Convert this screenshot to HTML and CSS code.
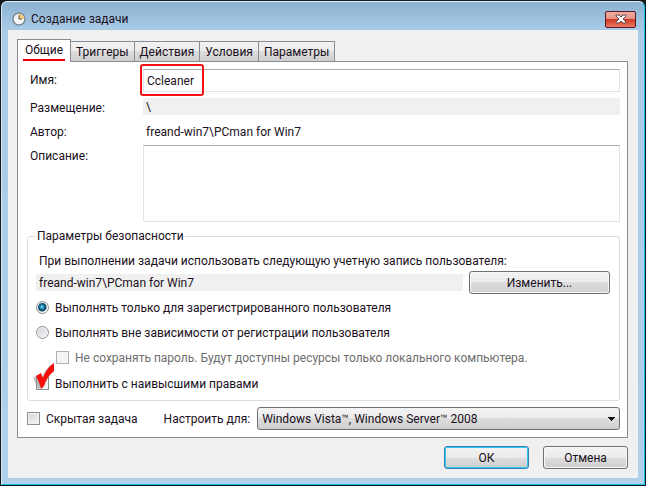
FILE: index.html
```html
<!DOCTYPE html>
<html lang="ru">
<head>
  <meta charset="UTF-8" />
  <meta name="viewport" content="width=device-width, initial-scale=1.0"/>
  <title>Создание задачи</title>
  <link rel="stylesheet" href="styles.css">
</head>
<body>
  <div class="window">
    <div class="title-bar">
      <svg class="title-icon" width="14" height="14" viewBox="0 0 14 14">
        <circle cx="7" cy="7" r="6" fill="#f3f5f6" stroke="#7d8890" stroke-width="1.4"/>
        <path d="M7 7V2A5 5 0 0 1 12 7Z" fill="#f6cf78"/>
        <path d="M7 3V7H10" fill="none" stroke="#5a5040" stroke-width="1"/>
      </svg>
      <span class="title-text">Создание задачи</span>
      <button class="close-btn" aria-label="Закрыть">
        <svg width="12" height="10" viewBox="0 0 12 10">
          <path d="M1 1H4L6 3L8 1H11V2L8 5L11 8V9H8L6 7L4 9H1V8L4 5L1 2Z" fill="#fff" stroke="#5e4a50" stroke-width="1"/>
        </svg>
      </button>
    </div>

    <div class="client">
      <div class="tabs" role="tablist">
        <button class="tab active" role="tab" aria-selected="true"><span>Общие</span></button>
        <button class="tab" role="tab">Триггеры</button>
        <button class="tab" role="tab">Действия</button>
        <button class="tab" role="tab">Условия</button>
        <button class="tab" role="tab">Параметры</button>
      </div>

      <form class="panel" id="taskForm">
        <div class="fields">
          <label for="name">Имя:</label>
          <div class="name-wrap">
            <input type="text" id="name" class="text-input" value="Ccleaner">
            <div class="highlight"></div>
          </div>
          <label for="location">Размещение:</label>
          <input type="text" id="location" class="readonly" value="\" readonly>
          <label for="author">Автор:</label>
          <output id="author" class="author">freand-win7\PCman for Win7</output>
          <label for="description">Описание:</label>
          <textarea id="description" class="text-area"></textarea>
        </div>

        <fieldset class="security">
          <legend>Параметры безопасности</legend>
          <label class="account-label" for="account">При выполнении задачи использовать следующую учетную запись пользователя:</label>
          <div class="account-row">
            <input type="text" id="account" class="readonly" value="freand-win7\PCman for Win7" readonly>
            <button type="button" class="btn">Изменить...</button>
          </div>
          <label class="option"><input type="radio" name="logon" checked>Выполнять только для зарегистрированного пользователя</label>
          <label class="option"><input type="radio" name="logon">Выполнять вне зависимости от регистрации пользователя</label>
          <label class="option nested"><input type="checkbox" disabled>Не сохранять пароль. Будут доступны ресурсы только локального компьютера.</label>
          <label class="option highest">
            <input type="checkbox">Выполнить с наивысшими правами
            <svg class="red-check" width="24" height="30" viewBox="0 0 24 30">
              <path d="M1 16L5 13L9 18C11 11 15 5 19 3L18 9C14 14 12 19 10 26L6 27Z" fill="#777" opacity="0.4"/>
              <path d="M4 14L9 11L11 16C13 10 17 4 22 1V9C17 13 14 18 12 24L9 27C8 22 6 18 4 14Z" fill="#f5100c"/>
            </svg>
          </label>
        </fieldset>

        <div class="bottom-row">
          <label class="option"><input type="checkbox">Скрытая задача</label>
          <label class="configure-label" for="configure">Настроить для:</label>
          <select id="configure" class="select">
            <option>Windows Vista™, Windows Server™ 2008</option>
          </select>
        </div>
      </form>

      <div class="actions">
        <button type="submit" form="taskForm" class="btn default">ОК</button>
        <button type="button" class="btn">Отмена</button>
      </div>
    </div>
  </div>
</body>
</html>
```
FILE: styles.css
```css
* {
  box-sizing: border-box;
}
body {
  margin: 0;
  background: #16181c;
  color: #1a1020;
}
body, button, input, textarea, select {
  font-family: Roboto, "Noto Sans", sans-serif;
  font-size: 12px;
  line-height: 16px;
}
button, input, textarea, select {
  color: inherit;
  margin: 0;
}
.window {
  display: flex;
  flex-direction: column;
  min-height: calc(100vh - 2px);
  margin: 1px;
  padding: 0 6px 6px;
  border: 1px solid #0fc3e6;
  border-top-color: #e4f2fa;
  border-left-color: #d5e9f6;
  border-radius: 6px 6px 0 0;
  background: linear-gradient(#8bb2d2, #a9cbe6 28px, #b1d0ea);
}
.title-bar {
  display: flex;
  align-items: center;
  height: 28px;
  padding: 6px 2px 0 4px;
}
.title-text {
  flex: 1;
  margin-left: 5px;
}
.close-btn {
  display: flex;
  align-items: center;
  justify-content: center;
  width: 31px;
  height: 17px;
  padding: 0;
  border: 1px solid #5a1a22;
  border-radius: 2px;
  background: linear-gradient(#f0aca3, #e58f82 50%, #d03a26 50%, #ea7862);
}
.client {
  flex: 1;
  padding: 9px 10px 8px 9px;
  background: #f0f0f0;
}

/* tabs */
.tabs {
  display: flex;
  align-items: flex-end;
}
.tab {
  height: 20px;
  padding: 0 5px;
  border: 1px solid #898c95;
  border-bottom: none;
  border-left: none;
  background: linear-gradient(#f2f2f2, #ebebeb 50%, #dddddd 50%, #cfcfcf);
}
.tab.active {
  height: 23px;
  margin-bottom: -1px;
  padding: 0 5px;
  border-left: 1px solid #898c95;
  background: #fff;
  z-index: 1;
}
.tab.active span {
  display: block;
  height: 20px;
  padding: 1px 2px 0;
  border-bottom: 2px solid #f5000a;
}
.panel {
  padding: 7px 7px 7px 9px;
  border: 1px solid #898c95;
  background: #fff;
}

/* general fields */
.fields {
  display: grid;
  grid-template-columns: 109px 1fr;
  column-gap: 4px;
  row-gap: 5px;
  padding-left: 3px;
}
.fields label {
  padding-top: 3px;
}
.name-wrap {
  position: relative;
  display: flex;
}
.text-input {
  width: 100%;
  height: 23px;
  padding: 0 3px;
  border: 1px solid #e2e3ea;
  border-top-color: #abadb3;
}
.highlight {
  position: absolute;
  top: -5px;
  left: -3px;
  width: 64px;
  height: 32px;
  border: 2px solid #fa0f14;
  border-radius: 3px;
  pointer-events: none;
}
.readonly {
  align-self: center;
  width: 100%;
  height: 17px;
  padding: 0 3px;
  border: none;
  background: #f0f0f0;
}
.author {
  padding: 3px 3px 0;
}
.text-area {
  width: 100%;
  height: 77px;
  border: 1px solid #e2e3ea;
  border-top-color: #abadb3;
  resize: none;
}

/* security group */
.security {
  margin: 6px 0 0;
  padding: 9px 9px 8px 8px;
  border: 1px solid #d5dfe5;
  border-radius: 3px;
}
.security legend {
  padding: 0 1px;
}
.account-label {
  display: block;
  padding-left: 3px;
}
.account-row {
  display: flex;
  align-items: center;
  gap: 6px;
  margin: 2px 0 5px;
}
.account-row .readonly {
  flex: 1;
}
.btn {
  height: 23px;
  padding: 0;
  border: 1px solid #707070;
  border-radius: 3px;
  background: linear-gradient(#f3f3f3, #ebebeb 50%, #dddddd 50%, #cfcfcf);
  box-shadow: inset 0 0 0 1px #f8f8f8;
}
.account-row .btn {
  width: 141px;
}
.option {
  display: flex;
  align-items: center;
  height: 17px;
}
.security .option {
  margin-bottom: 8px;
}
.option input {
  appearance: none;
  flex: none;
  width: 13px;
  height: 13px;
  margin-right: 6px;
  border: 1px solid #8e8f8f;
  background: linear-gradient(135deg, #cfd3d8, #f6f6f6);
  box-shadow: inset 0 0 0 1px #f4f4f4;
}
.option input[type="radio"] {
  border-radius: 50%;
}
.option input[type="radio"]:checked {
  background: radial-gradient(circle at 5px 5px, #8fdcf4 0, #1d86b0 2px, #0b3a58 4px, #e8eef2 5px);
}
.option input:disabled {
  border-color: #b1b1b1;
  background: #f4f4f4;
}
.option.nested {
  padding-left: 20px;
  color: #6d6d6d;
}
.security .highest {
  position: relative;
  margin: 9px 0 0;
}
.red-check {
  position: absolute;
  left: -4px;
  top: -13px;
}

/* bottom */
.bottom-row {
  display: flex;
  align-items: center;
  margin-top: 6px;
}
.configure-label {
  margin: 0 7px 0 26px;
}
.select {
  flex: 1;
  min-width: 0;
  height: 23px;
  padding: 0 4px;
  appearance: none;
  border: 1px solid #707070;
  border-radius: 3px;
  background:
    conic-gradient(from -45deg at 50% 100%, #111 90deg, transparent 0) right 4px top 9px / 7px 4px no-repeat,
    linear-gradient(#f3f3f3, #ebebeb 50%, #dddddd 50%, #cfcfcf);
}
.actions {
  display: flex;
  justify-content: flex-end;
  gap: 14px;
  margin-top: 8px;
}
.actions .btn {
  width: 85px;
}
.btn.default {
  border-color: #3c7fb1;
  box-shadow: inset 0 0 0 1px #2fc8f0;
}
```
